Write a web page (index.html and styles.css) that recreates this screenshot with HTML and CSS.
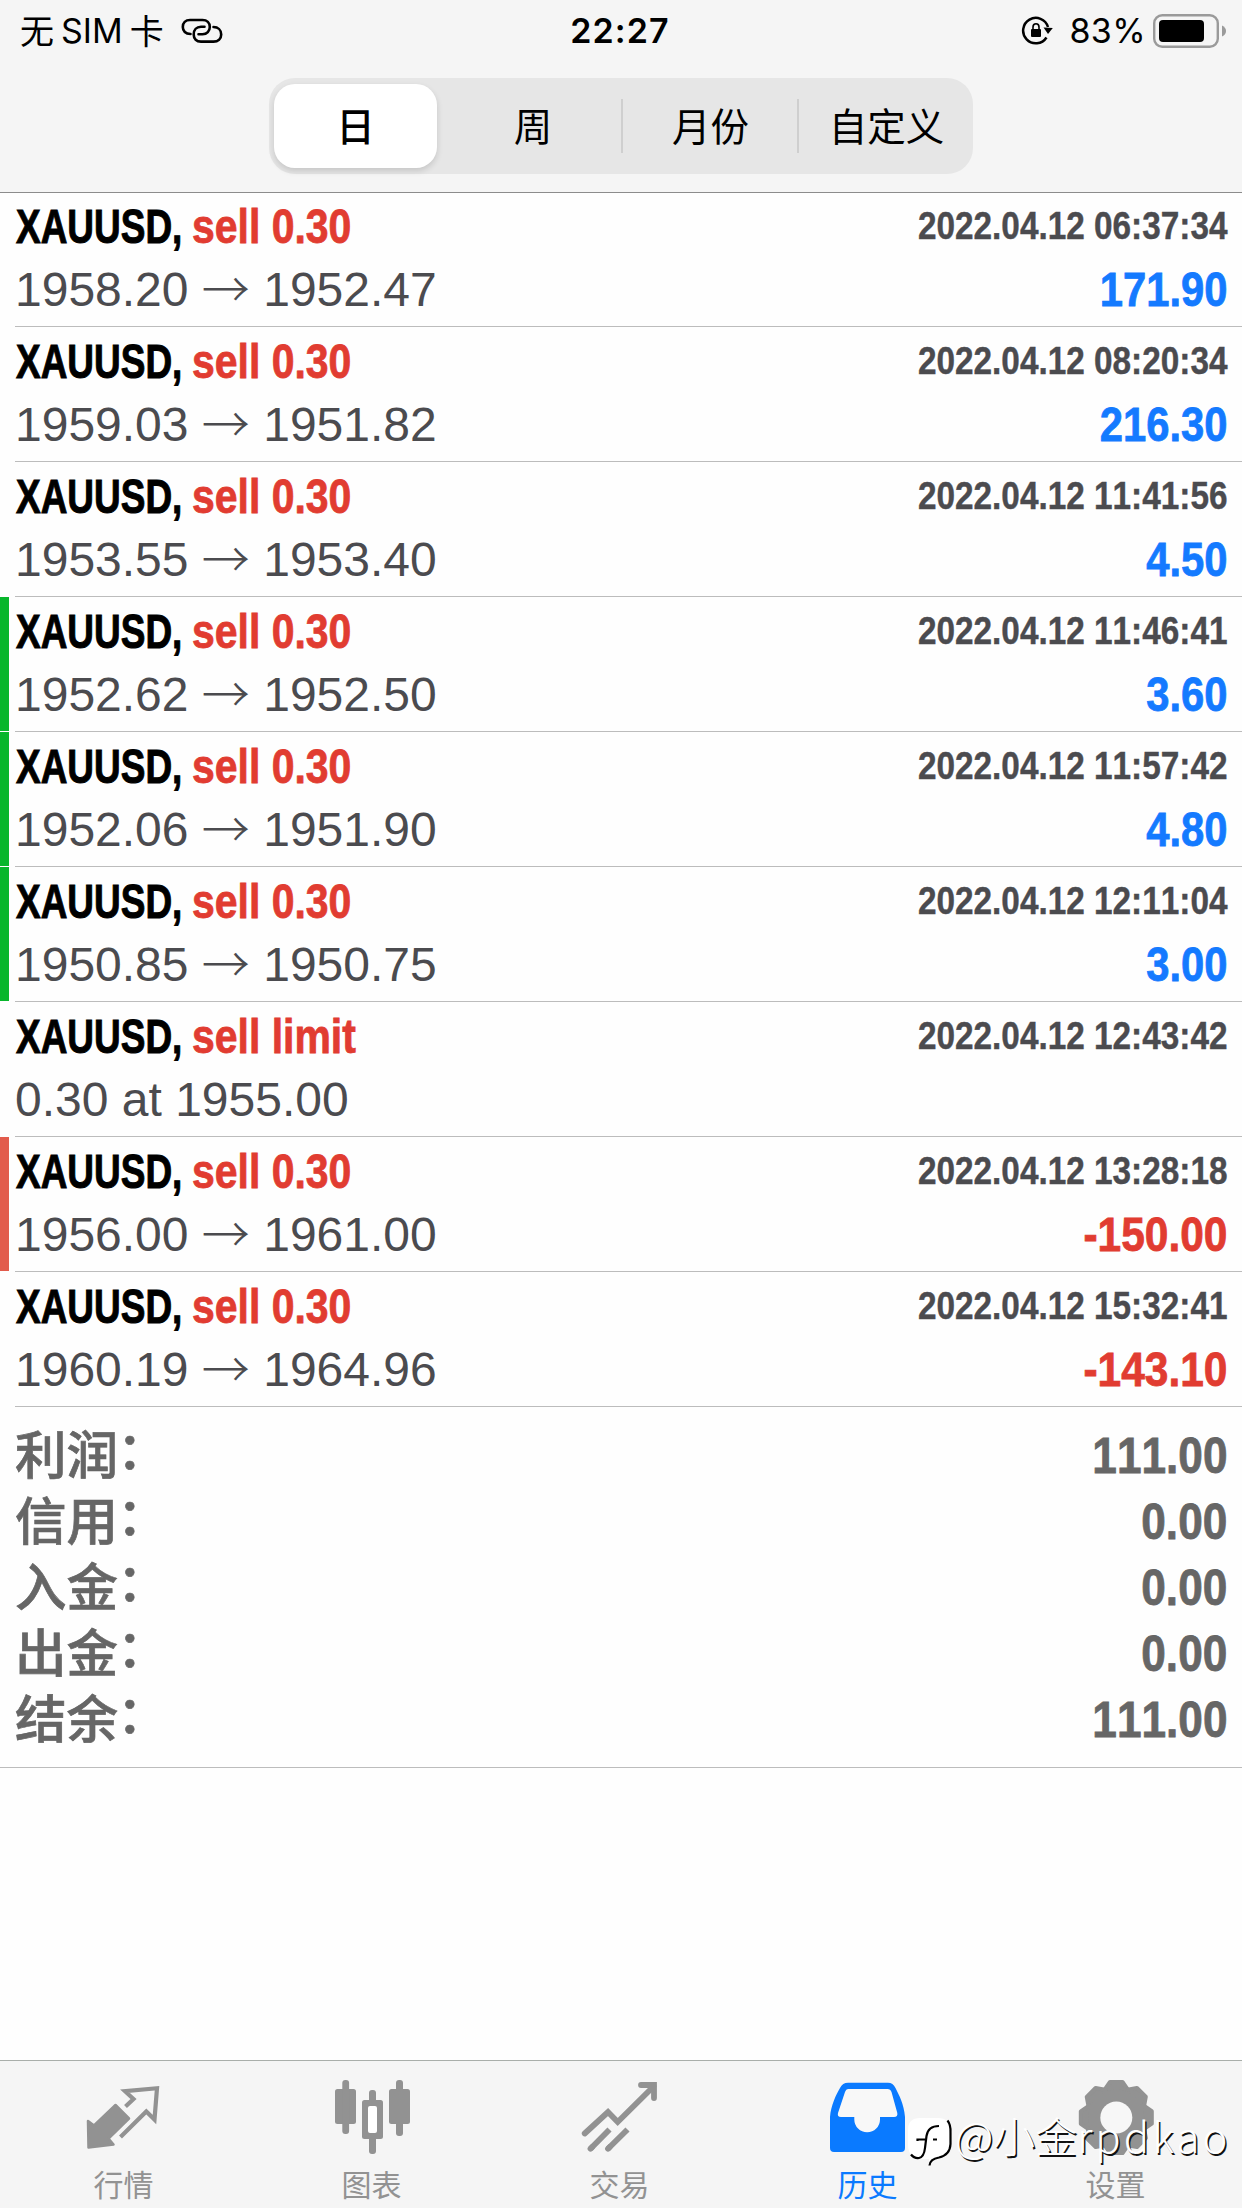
FILE: index.html
```html
<!DOCTYPE html>
<html lang="zh-CN">
<head>
<meta charset="utf-8">
<title>历史</title>
<link rel="stylesheet" href="styles.css">
</head>
<body>
<div class="app">
  <header class="header">
    <div class="status">
      <div class="status-left">
        <span class="cjk">无</span><span class="sim">SIM</span><span class="cjk">卡</span>
        <svg class="link" width="42" height="26" viewBox="0 0 42 26" fill="none" stroke="#000" stroke-width="2.6" stroke-linecap="round">
          <path d="M9.500 16C4.500 16 1.800 13 1.800 9C1.800 5 4.500 2 9 2H21.500C26 2 28.800 5 28.800 9C28.800 13 26 16.300 21.500 16.300H17.500"/>
          <path d="M32.500 9C37 9 40.200 12 40.200 16.500C40.200 21 37 23.600 32.500 23.600H20C15.500 23.600 12.700 21 12.700 16.500C12.700 12 15.500 8.800 20 8.800H23.500"/>
        </svg>
      </div>
      <div class="time">22:27</div>
      <div class="status-right">
        <svg class="lock" width="32" height="30" viewBox="0 0 32 30">
          <path d="M27 11A12.700 12.700 0 1 0 25.500 21.500" fill="none" stroke="#000" stroke-width="2.500"/>
          <path d="M22.500 11.500L31.800 12L27 18Z"/>
          <rect x="10" y="13" width="10" height="8" rx="1"/>
          <path d="M12 14V11A3 3.300 0 0 1 18 11V14" fill="none" stroke="#000" stroke-width="1.600"/>
        </svg>
        <span class="percent">83%</span>
        <svg class="battery" width="74" height="34" viewBox="0 0 74 34">
          <rect x="1.200" y="1.200" width="63.600" height="31.600" rx="8" fill="none" stroke="#9a9a9a" stroke-width="2.400"/>
          <rect x="6" y="6" width="45" height="22" rx="4"/>
          <path d="M69 11.500Q73 13.500 73 17T69 22.500Z" fill="#9a9a9a"/>
        </svg>
      </div>
    </div>
    <nav class="segments">
      <span class="segment selected">日</span>
      <span class="segment">周</span>
      <span class="segment ruled">月份</span>
      <span class="segment ruled">自定义</span>
    </nav>
  </header>

  <ul class="deals">
    <li class="deal"><i class="mark"></i><div class="body">
      <div class="title"><b class="symbol">XAUUSD,</b><b class="side">sell 0.30</b></div><time class="date">2022.04.12 06:37:34</time>
      <div class="price">1958.20 <span class="arrow">→</span> 1952.47</div><b class="amount">171.90</b></div></li>
    <li class="deal"><i class="mark"></i><div class="body">
      <div class="title"><b class="symbol">XAUUSD,</b><b class="side">sell 0.30</b></div><time class="date">2022.04.12 08:20:34</time>
      <div class="price">1959.03 <span class="arrow">→</span> 1951.82</div><b class="amount">216.30</b></div></li>
    <li class="deal"><i class="mark"></i><div class="body">
      <div class="title"><b class="symbol">XAUUSD,</b><b class="side">sell 0.30</b></div><time class="date">2022.04.12 11:41:56</time>
      <div class="price">1953.55 <span class="arrow">→</span> 1953.40</div><b class="amount">4.50</b></div></li>
    <li class="deal"><i class="mark profit"></i><div class="body">
      <div class="title"><b class="symbol">XAUUSD,</b><b class="side">sell 0.30</b></div><time class="date">2022.04.12 11:46:41</time>
      <div class="price">1952.62 <span class="arrow">→</span> 1952.50</div><b class="amount">3.60</b></div></li>
    <li class="deal"><i class="mark profit"></i><div class="body">
      <div class="title"><b class="symbol">XAUUSD,</b><b class="side">sell 0.30</b></div><time class="date">2022.04.12 11:57:42</time>
      <div class="price">1952.06 <span class="arrow">→</span> 1951.90</div><b class="amount">4.80</b></div></li>
    <li class="deal"><i class="mark profit"></i><div class="body">
      <div class="title"><b class="symbol">XAUUSD,</b><b class="side">sell 0.30</b></div><time class="date">2022.04.12 12:11:04</time>
      <div class="price">1950.85 <span class="arrow">→</span> 1950.75</div><b class="amount">3.00</b></div></li>
    <li class="deal"><i class="mark"></i><div class="body">
      <div class="title"><b class="symbol">XAUUSD,</b><b class="side">sell limit</b></div><time class="date">2022.04.12 12:43:42</time>
      <div class="price">0.30 at 1955.00</div></div></li>
    <li class="deal"><i class="mark loss"></i><div class="body">
      <div class="title"><b class="symbol">XAUUSD,</b><b class="side">sell 0.30</b></div><time class="date">2022.04.12 13:28:18</time>
      <div class="price">1956.00 <span class="arrow">→</span> 1961.00</div><b class="amount negative">-150.00</b></div></li>
    <li class="deal"><i class="mark"></i><div class="body">
      <div class="title"><b class="symbol">XAUUSD,</b><b class="side">sell 0.30</b></div><time class="date">2022.04.12 15:32:41</time>
      <div class="price">1960.19 <span class="arrow">→</span> 1964.96</div><b class="amount negative">-143.10</b></div></li>
  </ul>

  <dl class="totals">
    <div class="total"><dt>利润<span class="colon">：</span></dt><dd>111.00</dd></div>
    <div class="total"><dt>信用<span class="colon">：</span></dt><dd>0.00</dd></div>
    <div class="total"><dt>入金<span class="colon">：</span></dt><dd>0.00</dd></div>
    <div class="total"><dt>出金<span class="colon">：</span></dt><dd>0.00</dd></div>
    <div class="total"><dt>结余<span class="colon">：</span></dt><dd>111.00</dd></div>
  </dl>

  <nav class="tabs">
    <div class="tab">
      <svg class="icon" viewBox="0 0 80 80">
        <path d="M4 45L10 49.500L31.500 29L45 42.500L24.500 62.500L29.500 68.500L4.500 71.500Z" fill="#929292" stroke="#929292" stroke-width="2.500" stroke-linejoin="round"/>
        <path d="M41.500 30.500L49.500 23L41 15.200L73 12.200L70.500 43.500L62.300 35.500L36.500 61" fill="none" stroke="#929292" stroke-width="4.200"/>
      </svg>
      <span>行情</span>
    </div>
    <div class="tab">
      <svg class="icon" viewBox="0 0 80 80" fill="#929292">
        <rect x="3" y="13" width="21" height="35" rx="2.500"/><rect x="10.300" y="4" width="6.800" height="54" rx="3"/>
        <rect x="57" y="13" width="21" height="35" rx="2.500"/><rect x="64" y="4" width="7" height="56" rx="3"/>
        <rect x="30" y="24" width="21" height="39" rx="2.500"/><rect x="37" y="14" width="7" height="64" rx="3"/>
        <rect x="36" y="30" width="9" height="27" rx="2" fill="#fff"/>
      </svg>
      <span>图表</span>
    </div>
    <div class="tab">
      <svg class="icon" viewBox="0 0 80 80" fill="none" stroke="#929292" stroke-width="5.800" stroke-linecap="round">
        <path d="M4.700 57.500L28 36L37.700 46L73.500 10.500"/>
        <path d="M61 9H74V22"/>
        <path d="M10.500 72.700L29.500 53.500M28 72.700L47.500 53.500" stroke-linecap="butt"/>
        <path d="M10.500 72.700L12 71.200M28 72.700L29.500 71.200"/>
      </svg>
      <span>交易</span>
    </div>
    <div class="tab active">
      <svg class="icon" viewBox="0 0 80 80">
        <path d="M2 41C3 29 8 19 12 12Q14.500 6.700 20 6.700H60Q65 6.700 67.500 12C71 19 76 28 77 41V72Q77 76 73 76H6Q2 76 2 72Z" fill="#0a7aff"/>
        <path d="M20 13H59.500Q62.500 13 63.500 16L69.300 37Q70 41 66 41H52V43.500A12.800 12.800 0 0 1 26.300 43.500V41H13Q9 41 10 37L17 16Q18 13 20 13Z" fill="#f8f8f8"/>
      </svg>
      <span>历史</span>
    </div>
    <div class="tab">
      <svg class="icon" viewBox="0 0 80 80" fill="#929292" stroke="#929292" stroke-width="4" stroke-linejoin="round">
        <defs><path id="tooth" d="M28.500 14L34 6H46.500L52 14L46 30H34Z"/></defs>
        <use href="#tooth"/>
        <use href="#tooth" transform="rotate(45 40.300 41.500)"/>
        <use href="#tooth" transform="rotate(90 40.300 41.500)"/>
        <use href="#tooth" transform="rotate(135 40.300 41.500)"/>
        <use href="#tooth" transform="rotate(180 40.300 41.500)"/>
        <use href="#tooth" transform="rotate(225 40.300 41.500)"/>
        <use href="#tooth" transform="rotate(270 40.300 41.500)"/>
        <use href="#tooth" transform="rotate(315 40.300 41.500)"/>
        <circle cx="40.300" cy="41.500" r="22" fill="none" stroke-width="12"/>
        <circle cx="40.300" cy="41.500" r="16" fill="#f7f7f7" stroke="none"/>
      </svg>
      <span>设置</span>
    </div>
  </nav>

  <div class="watermark">
    <svg width="46" height="50" viewBox="0 0 46 50">
      <path d="M12 1H30Q42 1 42 13V28Q42 40 30 41L21 48V42L12 42Q0 40 0 28V13Q0 1 12 1Z" fill="#fff"/>
      <path d="M39.500 3.500Q43 8 42.500 16V27Q42 38 31 40.500Q22 42 21.500 48.500M3 37.500Q6 41.500 11 41Q16 40 17 31L18.500 19Q20 9 31 9M9.500 24V22.500H17M25 22.500H29" fill="none" stroke="#000" stroke-width="2.200"/>
    </svg>
    <span class="handle">@小金<span class="latin">rpdkao</span></span>
  </div>
</div>
</body>
</html>
```

FILE: styles.css
```css
* { box-sizing: border-box; }
body {
  margin: 0;
  background: #fefefe;
  font-family: "Liberation Sans", "Noto Sans CJK SC", sans-serif;
}
.app {
  position: relative;
  display: flex;
  flex-direction: column;
  width: 1242px;
  height: 2208px;
  overflow: hidden;
}
ul, dl, dd { margin: 0; padding: 0; list-style: none; }

/* status bar and period switch */
.header {
  flex: none;
  height: 193px;
  background: #f5f5f5;
  border-bottom: 1px solid #8c8c8c;
}
.status {
  display: grid;
  grid-template-columns: 1fr auto 1fr;
  align-items: center;
  height: 62px;
  padding: 0 15px 0 20px;
  font: 400 34px/62px Inter, "Noto Sans CJK SC", sans-serif;
}
.status-left, .status-right { display: flex; align-items: center; }
.status-right { justify-content: flex-end; }
.cjk { height: 62px; font-family: "Noto Sans CJK SC", sans-serif; line-height: 60px; }
.sim { margin: 0 7px 0 7px; }
.link { margin-left: 17px; }
.time { padding-right: 7px; font-weight: 600; letter-spacing: 1.1px; }
.lock { margin-right: 16px; }
.percent { margin-right: 7px; letter-spacing: 0.4px; }
.segments {
  display: grid;
  grid-template-columns: repeat(4, 176px);
  width: 704px;
  height: 96px;
  margin: 16px auto 0;
  border-radius: 26px;
  background: #e6e6e6;
}
.segment {
  display: flex;
  align-items: center;
  justify-content: center;
  padding-bottom: 4px;
  font: 400 38.5px/1 "Noto Sans CJK SC", sans-serif;
}
.selected {
  width: 163px;
  height: 84px;
  margin: 6px 0 0 5px;
  border-radius: 21px;
  background: #fff;
  font-weight: 500;
  box-shadow: 0 3px 6px rgba(0, 0, 0, .14);
}
.ruled {
  padding-left: 3px;
  background: linear-gradient(#cfcfcf, #cfcfcf) 0 21px / 2px 54px no-repeat;
}

/* closed deals */
.deals { margin-top: -1px; font-kerning: none; }
.deal { display: flex; height: 135px; }
.mark { width: 9px; height: 134px; margin-right: 6px; }
.profit { background: #08b62c; }
.loss { background: #e25b4c; }
.body {
  flex: 1;
  display: grid;
  grid-template-columns: 1fr auto;
  grid-template-rows: 69px 56px;
  padding-right: 15px;
  border-bottom: 1px solid #bcbcbc;
  white-space: nowrap;
}
.title { display: flex; padding-left: 1px; font-size: 48px; line-height: 69px; }
.symbol {
  width: 176px;
  transform: scaleX(.77);
  transform-origin: 0 0;
  -webkit-text-stroke: 1px currentColor;
}
.side {
  color: #e13c31;
  transform: scaleX(.853);
  transform-origin: 0 0;
  -webkit-text-stroke: .8px currentColor;
}
.date {
  color: #4b4b4f;
  font-size: 38.5px;
  font-weight: 700;
  line-height: 68px;
  transform: scaleX(.866);
  transform-origin: 100% 0;
  -webkit-text-stroke: .4px currentColor;
}
.price { color: #4b4b4f; font-size: 48px; line-height: 58px; }
.arrow {
  display: inline-block;
  width: 48px;
  height: 56px;
  font-family: "Noto Sans CJK SC", sans-serif;
  font-weight: 300;
  line-height: 50px;
  vertical-align: top;
}
.amount {
  color: #147aff;
  font-size: 48px;
  line-height: 58px;
  text-align: right;
  transform: scaleX(.87);
  transform-origin: 100% 0;
  -webkit-text-stroke: .8px currentColor;
}
.negative { color: #e13c31; transform: scaleX(.885); }

/* account totals */
.totals {
  padding: 16px 15px 14px;
  border-bottom: 1px solid #bcbcbc;
  color: #666;
  font-kerning: none;
}
.total { display: flex; justify-content: space-between; height: 66px; }
.total dt {
  display: flex;
  height: 58px;
  font: 500 51.5px/58px "Noto Sans CJK SC", sans-serif;
  -webkit-text-stroke: .7px currentColor;
}
.colon { margin-left: -1px; line-height: 47px; }
.total dd {
  font-size: 50.5px;
  font-weight: 700;
  line-height: 66px;
  transform: scaleX(.875);
  transform-origin: 100% 0;
  -webkit-text-stroke: .8px currentColor;
}

/* bottom navigation */
.tabs {
  display: grid;
  grid-template-columns: repeat(5, 248px);
  height: 148px;
  margin-top: auto;
  border-top: 1px solid #a9aeaa;
  background: #f5f5f5;
}
.tab {
  display: flex;
  flex-direction: column;
  align-items: center;
  padding-top: 15px;
  color: #929292;
  font: 400 30px/50px "Noto Sans CJK SC", sans-serif;
}
.tab span { padding-right: 1px; }
.icon { width: 80px; height: 80px; margin-bottom: 2px; }
.active { color: #0a7aff; }

.watermark {
  position: absolute;
  left: 908px;
  top: 2117px;
  display: flex;
}
.handle {
  margin-left: 1px;
  height: 42px;
  color: #fff;
  font: 300 42px/35px "Noto Sans CJK SC", sans-serif;
  text-shadow: 1.5px 1.5px 0 #111;
  white-space: nowrap;
}
.latin { letter-spacing: 3px; }
```
